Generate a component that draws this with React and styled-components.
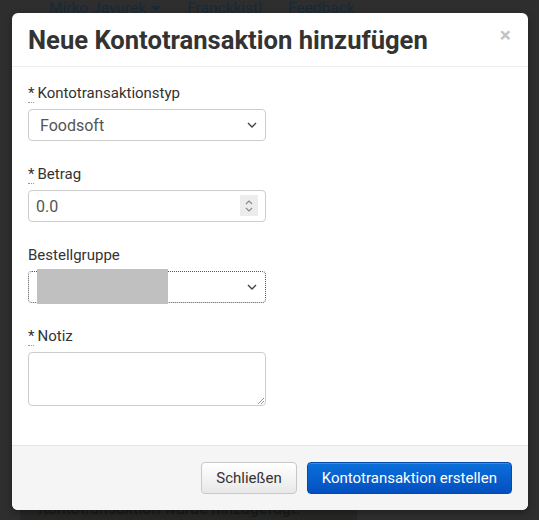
import React from "react";
import styled, { createGlobalStyle } from "styled-components";

const GlobalStyle = createGlobalStyle`
  html, body {
    margin: 0;
    height: 100%;
    background: #2d2d2d;
    font-family: Roboto, "Liberation Sans", sans-serif;
  }
`;

const Page = styled.div`
  position: relative;
  width: 539px;
  height: 520px;
  overflow: hidden;
  background: #2e2e2e;
`;

const Nav = styled.div`
  display: flex;
  gap: 26px;
  padding: 0 0 0 49px;
  height: 30px;
  font-size: 15.5px;
  line-height: 16px;
  margin-top: -1px;
  color: #172a38;
`;

const NavItem = styled.span`
  position: relative;
  padding-top: 1px;
  ${(p) =>
    p.marked &&
    `
    &::before {
      content: "";
      position: absolute;
      left: 3px;
      top: 1px;
      width: 85px;
      height: 4px;
      background: #3a0505;
      z-index: -1;
    }
  `}
`;

const Caret = styled.span`
  display: inline-block;
  margin-left: 5px;
  border-top: 5px solid #172a38;
  border-left: 5px solid transparent;
  border-right: 5px solid transparent;
  vertical-align: middle;
`;

const Bottom = styled.div`
  position: absolute;
  left: 20px;
  bottom: 0;
  width: 337px;
  height: 22px;
  background: #262825;
  color: #171a17;
  font-size: 16px;
  padding-left: 18px;
  box-sizing: border-box;
  line-height: 22px;
`;

const Modal = styled.div`
  position: absolute;
  left: 12px;
  top: 13px;
  width: 516px;
  height: 497px;
  display: flex;
  flex-direction: column;
  background: #fff;
  border-radius: 6px;
  box-shadow: 0 3px 7px rgba(0, 0, 0, 0.3);
  overflow: hidden;
`;

const Header = styled.div`
  display: flex;
  align-items: center;
  justify-content: space-between;
  height: 53px;
  padding: 0 16px;
  border-bottom: 1px solid #eee;
  flex-shrink: 0;
`;

const Title = styled.h3`
  margin: 0;
  font-size: 25.6px;
  font-weight: 700;
  color: #333;
`;

const Close = styled.span`
  font-size: 21px;
  font-weight: 700;
  color: #c4c4c4;
  margin-top: -10px;
  margin-right: 1px;
`;

const Body = styled.div`
  flex: 1;
  padding: 16px 16px 0;
  display: flex;
  flex-direction: column;
`;

const Group = styled.div`
  display: flex;
  flex-direction: column;
  margin-bottom: 23px;
`;

const Label = styled.label`
  font-size: 15px;
  color: #333;
  line-height: 20px;
  margin-bottom: 6px;
`;

const Req = styled.abbr`
  text-decoration: none;
  border-bottom: 1px dotted #999;
  margin-right: 3px;
`;

const Field = styled.div`
  position: relative;
  box-sizing: border-box;
  width: 238px;
  height: ${(p) => p.h || 32}px;
  border: 1px solid ${(p) => (p.focus ? "transparent" : "#ccc")};
  outline: ${(p) => (p.focus ? "1px dotted #555" : "none")};
  outline-offset: -1px;
  border-radius: 4px;
  display: flex;
  align-items: center;
  padding: 0 ${(p) => (p.select ? 11 : 7)}px;
  font-size: 16px;
  color: #555;
  background: #fff;
`;

const Chevron = styled.svg`
  position: absolute;
  right: 8px;
  top: 50%;
  margin-top: -3px;
`;

const Spinner = styled.div`
  position: absolute;
  right: 7px;
  top: 4px;
  width: 18px;
  height: 21px;
  background: #ececec;
  display: flex;
  align-items: center;
  justify-content: center;
`;

const Redact = styled.div`
  position: absolute;
  left: 8px;
  top: -3px;
  width: 131px;
  height: 35px;
  background: #c0c0c0;
`;

const Grip = styled.svg`
  position: absolute;
  right: 1px;
  bottom: 1px;
`;

const Footer = styled.div`
  height: 65px;
  flex-shrink: 0;
  background: #f5f5f5;
  border-top: 1px solid #e5e5e5;
  display: flex;
  align-items: center;
  justify-content: flex-end;
  gap: 10px;
  padding: 0 16px 0 0;
  box-sizing: border-box;
`;

const Button = styled.button`
  height: 32px;
  padding: 0 14px;
  border-radius: 4px;
  font-family: Roboto, "Liberation Sans", sans-serif;
  font-size: 15px;
  cursor: pointer;
  color: ${(p) => (p.primary ? "#fff" : "#333")};
  border: 1px solid ${(p) => (p.primary ? "#0748a8" : "#c8c8c8")};
  background: ${(p) =>
    p.primary
      ? "linear-gradient(#0a70da, #0450c0)"
      : "linear-gradient(#fff, #e8e8e8)"};
  box-shadow: inset 0 1px 0 rgba(255, 255, 255, 0.2);
`;

const ChevronDown = () => (
  <Chevron width="10" height="6" viewBox="0 0 10 6">
    <path d="M1 1l4 4 4-4" fill="none" stroke="#444" strokeWidth="1.4" />
  </Chevron>
);

export default function App() {
  return (
    <Page>
      <GlobalStyle />
      <Nav>
        <NavItem marked>
          Mirko Javurek
          <Caret />
        </NavItem>
        <NavItem>Franckkistl</NavItem>
        <NavItem>Feedback</NavItem>
      </Nav>
      <Bottom>Kontotransaktion wurde hinzugefügt.</Bottom>

      <Modal>
        <Header>
          <Title>Neue Kontotransaktion hinzufügen</Title>
          <Close>×</Close>
        </Header>
        <Body>
          <Group>
            <Label>
              <Req title="erforderlich">*</Req>Kontotransaktionstyp
            </Label>
            <Field select>
              Foodsoft
              <ChevronDown />
            </Field>
          </Group>
          <Group>
            <Label>
              <Req title="erforderlich">*</Req>Betrag
            </Label>
            <Field>
              0.0
              <Spinner>
                <svg width="10" height="14" viewBox="0 0 10 14">
                  <path d="M2 5l3-3 3 3M2 9l3 3 3-3" fill="none" stroke="#888" strokeWidth="1.1" />
                </svg>
              </Spinner>
            </Field>
          </Group>
          <Group>
            <Label>Bestellgruppe</Label>
            <Field select focus>
              <Redact />
              <ChevronDown />
            </Field>
          </Group>
          <Group>
            <Label>
              <Req title="erforderlich">*</Req>Notiz
            </Label>
            <Field h={54}>
              <Grip width="6" height="6" viewBox="0 0 6 6">
                <path d="M6 0L0 6M6 3L3 6" stroke="#999" strokeWidth="1" />
              </Grip>
            </Field>
          </Group>
        </Body>
        <Footer>
          <Button>Schließen</Button>
          <Button primary>Kontotransaktion erstellen</Button>
        </Footer>
      </Modal>
    </Page>
  );
}
